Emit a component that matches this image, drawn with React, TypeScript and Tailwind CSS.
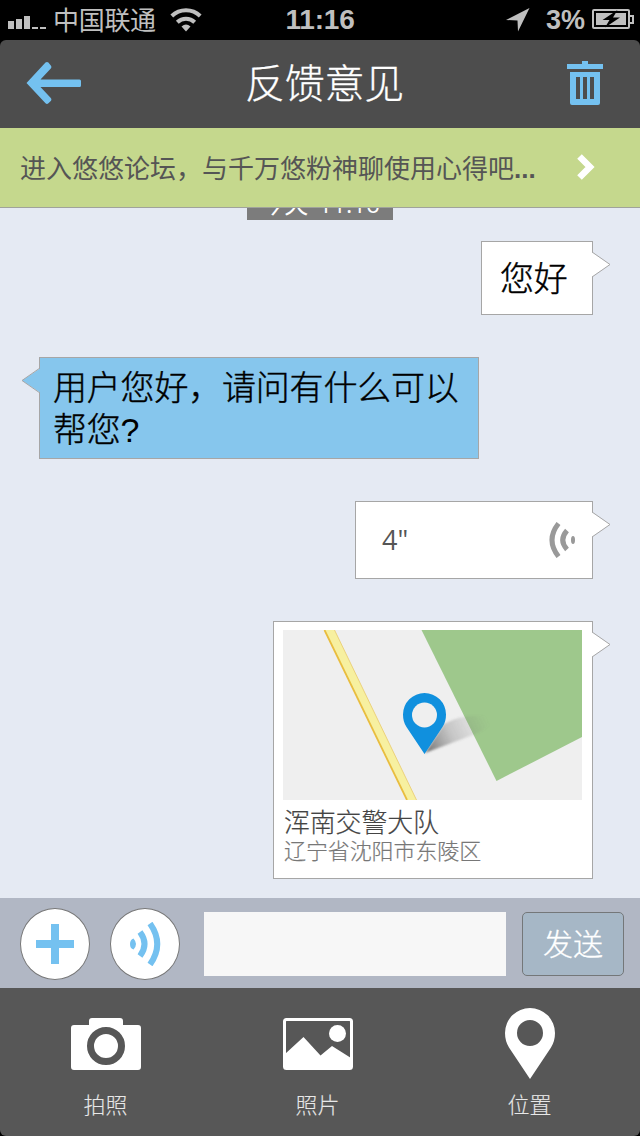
import type { ReactNode } from "react";

const menuItems = [
  { label: "拍照", icon: <CameraIcon /> },
  { label: "照片", icon: <PhotoIcon /> },
  { label: "位置", icon: <PlaceIcon /> },
];

function CameraIcon() {
  return (
    <svg width="70" height="52" viewBox="0 0 70 52" aria-hidden="true">
      <path
        fill="#fff"
        d="M3 7h15V3q0-3 3-3h28q3 0 3 3v4h15q3 0 3 3v39q0 3-3 3H3q-3 0-3-3V10q0-3 3-3z"
      />
      <circle cx="35" cy="28" r="15.5" fill="#fff" stroke="#575757" strokeWidth="7" />
    </svg>
  );
}

function PhotoIcon() {
  return (
    <svg width="70" height="52" viewBox="0 0 70 52" aria-hidden="true">
      <rect x="1.5" y="1.5" width="67" height="49" rx="2" fill="none" stroke="#fff" strokeWidth="3" />
      <path fill="#fff" d="M2 36L20.500 19L37.500 37.500L49 28L68 40v10H2z" />
      <circle cx="54.500" cy="15.500" r="8.500" fill="#fff" />
    </svg>
  );
}

function PlaceIcon() {
  return (
    <svg width="50" height="71" viewBox="0 0 50 71" aria-hidden="true">
      <path
        fill="#fff"
        fillRule="evenodd"
        d="M25 0A25 25 0 0 1 50 25Q50 33 46 39.500L25 71L4 39.500Q0 33 0 25A25 25 0 0 1 25 0zM25 12a13 13 0 1 0 0 26a13 13 0 1 0 0-26z"
      />
    </svg>
  );
}

function StatusBar() {
  return (
    <div className="flex h-10 items-center bg-black text-[#bfbfbf]">
      <div className="flex w-[213px] items-center pl-2">
        <svg width="38" height="14" viewBox="0 0 38 14" fill="currentColor" className="mt-1.5" aria-hidden="true">
          <path d="M0 5h6v8H0zM8 3h6v10H8zM16 0h6v13h-6zM24 11h6v2h-6zM32 11h6v2h-6z" />
        </svg>
        <span className="mt-0.5 ml-[7px] text-[26px] leading-10 tracking-[-0.3px]">中国联通</span>
        <svg width="32" height="24" viewBox="0 0 32 24" className="ml-[14px]" aria-hidden="true">
          <g fill="none" stroke="currentColor" strokeWidth="4">
            <path d="M1.800 8a20.500 20.500 0 0 1 28.400 0" />
            <path d="M7.300 14.300a12.500 12.500 0 0 1 17.400 0" />
          </g>
          <path fill="currentColor" d="M11.500 18.500q4.500-4 9 0L16 23.500z" />
        </svg>
      </div>
      <span className="flex-1 text-center text-[28px] font-bold leading-10 tracking-[-0.2px]">11:16</span>
      <div className="flex w-[213px] items-center justify-end pr-1.5">
        <svg width="24" height="24" viewBox="0 0 24 24" fill="currentColor" className="mr-4" aria-hidden="true">
          <path d="M23.500 0L12 23.500L11.500 12.500L0 12z" />
        </svg>
        <span className="mr-[7px] text-[27px] font-bold leading-10">3%</span>
        <svg width="42" height="20" viewBox="0 0 42 20" className="-mt-0.5" aria-hidden="true">
          <rect x="1" y="1" width="36" height="18" rx="1" fill="none" stroke="currentColor" strokeWidth="2" />
          <path d="M37 7h4v7h-4" fill="none" stroke="currentColor" strokeWidth="2" />
          <path fill="currentColor" d="M4 4h30v12H4z" />
          <path fill="#000" d="M25.500 1L10.500 11h7L13 18.500L28 8.500h-7z" />
        </svg>
      </div>
    </div>
  );
}

function Header() {
  return (
    <div className="bg-black">
      <header className="flex h-22 items-center justify-between rounded-t-md bg-[#4d4d4d] pr-[37px] pb-0.5 pl-[26px]">
        <button aria-label="返回">
          <svg width="56" height="42" viewBox="0 0 56 42" aria-hidden="true">
            <path
              fill="#74c1f0"
              d="M19.500 .6q1.500-1.200 2.900 0l2.400 2.900q1.200 1.400 0 2.900L14.500 17.500H53.500q1.500 0 1.500 1.500v4.500q0 1.500-1.500 1.500H14.500L24.800 36q1.200 1.400 0 2.900l-2.400 2.400q-1.400 1.300-2.900 0L.5 21z"
            />
          </svg>
        </button>
        <h1 className="pt-0.5 text-[40px] font-light leading-none tracking-[-0.2px] text-white [-webkit-text-stroke:0.3px]">
          反馈意见
        </h1>
        <button aria-label="删除">
          <svg width="36" height="44" viewBox="0 0 36 44" fill="#74c1f0" aria-hidden="true">
            <path d="M0 3h15V0h6v3h15v5H0z" />
            <path
              fillRule="evenodd"
              d="M3 11h30v31q0 2-2 2H5q-2 0-2-2zM9 16v22h4V16zM16 16v22h4V16zM23 16v22h4V16z"
            />
          </svg>
        </button>
      </header>
    </div>
  );
}

function ForumBanner() {
  return (
    <a href="#" className="flex h-20 items-center border-b border-[#a0a39b] bg-[#c5d88d] pr-[45px] pl-5 text-[#555]">
      <span className="flex-1 pt-0.5 whitespace-nowrap text-[26px] leading-10">
        进入悠悠论坛，与千万悠粉神聊使用心得吧<b>...</b>
      </span>
      <svg width="18" height="26" viewBox="0 0 18 26" className="-mt-0.5" aria-hidden="true">
        <path d="M2.500 2.500L13 13L2.500 23.500" fill="none" stroke="#fff" strokeWidth="6.5" />
      </svg>
    </a>
  );
}

function Bubble({ mine, className, children }: { mine?: boolean; className: string; children: ReactNode }) {
  return (
    <div
      className={`relative border border-[#a6a6a6] ${
        mine ? "mr-[47px] self-end bg-white" : "ml-[39px] self-start bg-[#86c6ed]"
      } ${className}`}
    >
      {children}
      <svg
        width="19"
        height="27"
        viewBox="0 0 19 27"
        className={`absolute top-[9px] ${mine ? "-right-[19px]" : "-left-[19px] -scale-x-100"}`}
        aria-hidden="true"
      >
        <path fill={mine ? "#fff" : "#86c6ed"} d="M0 1.500L18 13.500L0 25.500z" />
        <path fill="none" stroke="#a6a6a6" d="M.5 1.300L18 13.500L.5 25.700" />
      </svg>
    </div>
  );
}

function MapPreview() {
  return (
    <svg width="299" height="170" viewBox="0 0 299 170" aria-hidden="true">
      <defs>
        <linearGradient id="pinShadow" x1="142" y1="123" x2="206" y2="92" gradientUnits="userSpaceOnUse">
          <stop offset="0" stopColor="#444" stopOpacity=".75" />
          <stop offset=".45" stopColor="#666" stopOpacity=".3" />
          <stop offset="1" stopColor="#777" stopOpacity="0" />
        </linearGradient>
        <filter id="soften">
          <feGaussianBlur stdDeviation="1" />
        </filter>
      </defs>
      <path fill="#efefef" d="M0 0h299v170H0z" />
      <path fill="#9ec88c" d="M138.500 0H299v107L213.500 151z" />
      <path fill="#f7f0a0" d="M41 0H51.500L133.500 170H124z" />
      <path fill="none" stroke="#e9bd3f" strokeWidth="1.800" d="M41.500 0L124 170" />
      <path fill="none" stroke="#ecd27c" strokeWidth="1" d="M51.500 0L133.500 170" />
      <path
        fill="url(#pinShadow)"
        filter="url(#soften)"
        d="M142 123L161 94Q178 84 203 86Q218 91 195 103Z"
      />
      <path
        fill="#1090de"
        d="M141.500 63A21.500 21.500 0 0 1 163 84.500Q163 92 159.500 97L141.500 124L123.500 97Q120 92 120 84.500A21.500 21.500 0 0 1 141.500 63z"
      />
      <circle cx="141.500" cy="85" r="12.500" fill="#efefef" />
    </svg>
  );
}

function Conversation() {
  return (
    <main className="flex h-[690px] flex-col overflow-hidden bg-[#e5eaf3]">
      <time className="-mt-6 mb-[21px] h-9 w-[146px] shrink-0 self-center bg-[#7c7c7c] text-center font-['Open_Sans','Noto_Sans_CJK_SC',sans-serif] text-2xl leading-10 text-white [word-spacing:4px]">
        今天 11:16
      </time>
      <div className="flex flex-col gap-[42px]">
        <Bubble
          mine
          className="h-[74px] w-28 pl-[18px] text-[34px] leading-[74px] font-light tracking-[-0.2px] text-black [-webkit-text-stroke:0.4px]"
        >
          您好
        </Bubble>
        <Bubble className="h-[102px] w-[440px] pt-[9px] pl-[13px] text-[34px] leading-[42px] font-light tracking-[-0.2px] text-black [-webkit-text-stroke:0.4px]">
          用户您好，请问有什么可以
          <br />
          帮您<span className="[-webkit-text-stroke:0]">?</span>
        </Bubble>
        <Bubble mine className="flex h-[78px] w-[238px] items-center justify-between pr-4 pl-[26px]">
          <span className="pb-0.5 font-['Open_Sans',sans-serif] text-[27px] leading-none text-[#555]">4"</span>
          <svg width="27" height="36" viewBox="0 0 27 36" fill="none" stroke="#999" strokeWidth="5" aria-hidden="true">
            <path d="M9.500 1.500Q-3.500 18 9.500 34.500" />
            <path d="M18 8.500Q9.500 18 18 27.500" />
            <ellipse cx="24" cy="18" rx="2" ry="4" fill="#999" stroke="none" />
          </svg>
        </Bubble>
        <Bubble mine className="h-[258px] w-80 px-[9px] pt-2">
          <MapPreview />
          <div className="pt-[5px] pl-px">
            <p className="text-[26px] leading-9 font-light tracking-[-0.2px] text-[#444] [-webkit-text-stroke:0.2px]">
              浑南交警大队
            </p>
            <p className="text-[22px] leading-[22px] font-light tracking-[-0.1px] text-[#777] [-webkit-text-stroke:0.2px]">
              辽宁省沈阳市东陵区
            </p>
          </div>
        </Bubble>
      </div>
    </main>
  );
}

function Composer() {
  return (
    <div className="flex h-[90px] items-center bg-[#b1b7c4] px-4 pl-5">
      <button
        aria-label="更多"
        className="mt-0.5 flex h-18 w-[70px] items-center justify-center rounded-[50%] border border-[#777] bg-white"
      >
        <svg width="38" height="40" viewBox="0 0 38 40" aria-hidden="true">
          <path fill="#74c1f0" d="M15 0h8v16h15v8H23v16h-8V24H0v-8h15z" />
        </svg>
      </button>
      <button
        aria-label="语音"
        className="mt-0.5 ml-5 flex h-18 w-[70px] items-center justify-center rounded-[50%] border border-[#777] bg-white"
      >
        <svg width="31" height="44" viewBox="0 0 31 44" fill="none" stroke="#74c1f0" strokeWidth="6" aria-hidden="true">
          <path d="M20 1.500Q34.500 22 20 42.500" />
          <path d="M10 10Q19 22 10 34" />
          <path d="M3.500 16.500q5 5.500 0 11q-3.500-1-3.500-5.500t3.500-5.500z" fill="#74c1f0" stroke="none" />
        </svg>
      </button>
      <input type="text" aria-label="消息" className="mt-0.5 ml-6 h-16 w-[302px] bg-[#f7f7f7] px-3 text-3xl outline-none" />
      <button className="mt-0.5 ml-4 h-16 w-[102px] rounded-[5px] border border-[#747779] bg-[#a6b7c6] pt-0.5 text-[30px] leading-none font-light text-white [-webkit-text-stroke:0.3px]">
        发送
      </button>
    </div>
  );
}

function AttachmentMenu() {
  return (
    <div className="bg-black">
      <nav className="grid h-[148px] grid-cols-[212px_212px_212px] rounded-b-md bg-[#575757] pt-5">
        {menuItems.map(({ label, icon }) => (
          <button key={label} className="flex flex-col items-center">
            <span className="flex h-[71px] items-center">{icon}</span>
            <span className="mt-[9px] mr-px text-[22px] leading-9 font-light text-[#e8e8e8] [-webkit-text-stroke:0.1px]">
              {label}
            </span>
          </button>
        ))}
      </nav>
    </div>
  );
}

export default function App() {
  return (
    <div className="h-[1136px] w-[640px] overflow-hidden bg-black font-['Liberation_Sans','Noto_Sans_CJK_SC',sans-serif]">
      <StatusBar />
      <Header />
      <ForumBanner />
      <Conversation />
      <Composer />
      <AttachmentMenu />
    </div>
  );
}
